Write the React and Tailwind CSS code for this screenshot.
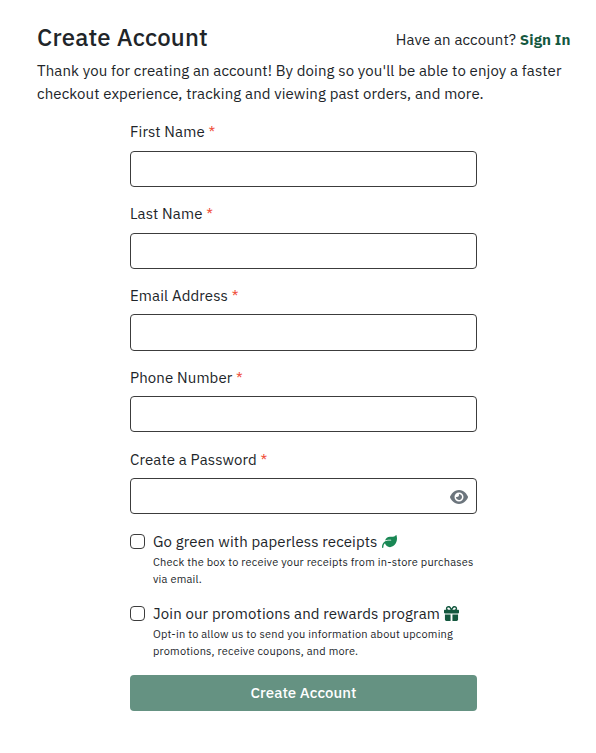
import React, { useState } from "react";
import { FaEye, FaGift, FaLeaf } from "react-icons/fa6";

const fields = [
  { id: "firstName", label: "First Name", type: "text" },
  { id: "lastName", label: "Last Name", type: "text" },
  { id: "email", label: "Email Address", type: "email" },
  { id: "phone", label: "Phone Number", type: "tel" },
  { id: "password", label: "Create a Password", type: "password" },
];

const Field = ({ field, value, onChange }) => {
  const [visible, setVisible] = useState(false);
  const isPassword = field.type === "password";

  return (
    <div className="mb-[16px] h-[65.8px]">
      <label htmlFor={field.id} className="block h-[30.45px] text-[15px] leading-[23px] tracking-[0.12px]">
        {field.label} <span className="text-[#f0503c]">*</span>
      </label>
      <div className="relative">
        <input
          id={field.id}
          type={isPassword && visible ? "text" : field.type}
          value={value}
          onChange={(e) => onChange(field.id, e.target.value)}
          className="block h-[36.2px] w-full rounded-[4px] border border-[#3c3c3c] px-3 text-[15px] outline-none"
          required
        />
        {isPassword && (
          <button
            type="button"
            aria-label="Show password"
            onClick={() => setVisible(!visible)}
            className="absolute top-[11px] right-[9px] text-[#6c757d]"
          >
            <FaEye className="h-[16px] w-[18px]" />
          </button>
        )}
      </div>
    </div>
  );
};

const Option = ({ id, title, icon, children }) => (
  <div className="flex h-[72px] items-start">
    <input
      id={id}
      type="checkbox"
      className="mt-[4px] mr-2 h-[15px] w-[15px] shrink-0 appearance-none rounded-[4px] border border-[#3c3c3c] checked:bg-[#14583f]"
    />
    <div className="whitespace-nowrap">
      <label htmlFor={id} className="flex h-[24px] items-start text-[15px] leading-[23px] tracking-[0.12px]">
        {title}
        {icon}
      </label>
      <p className="text-[11px] leading-[17px] tracking-[0.2px]">{children}</p>
    </div>
  </div>
);

const App = () => {
  const [form, setForm] = useState({});

  const handleChange = (id, value) => {
    setForm({ ...form, [id]: value });
  };

  const handleSubmit = (e) => {
    e.preventDefault();
  };

  return (
    <div className="min-h-[753px] bg-white pt-[22px] pr-[25.5px] pl-[37px] font-['IBM_Plex_Sans',Roboto,sans-serif] text-[#212529]">
      <header className="flex h-[38px] items-start justify-between whitespace-nowrap">
        <h1 className="text-[24px] leading-[30px] font-medium tracking-[0.18px]">Create Account</h1>
        <p className="pt-[7px] text-[15px] leading-[22.5px] tracking-[0.12px]">
          Have an account?{" "}
          <a href="#" className="font-bold text-[#14583f]">
            Sign In
          </a>
        </p>
      </header>
      <p className="text-[15px] leading-[22.5px] tracking-[0.11px] whitespace-nowrap">
        Thank you for creating an account! By doing so you'll be able to enjoy a faster
        <br />
        checkout experience, tracking and viewing past orders, and more.
      </p>

      <form onSubmit={handleSubmit} className="ml-[93px] w-[347px] pt-[15.35px]">
        {fields.map((field) => (
          <Field key={field.id} field={field} value={form[field.id] || ""} onChange={handleChange} />
        ))}
        <div className="h-[145.65px] pt-[1.15px]">
          <Option
            id="paperless"
            title="Go green with paperless receipts"
            icon={<FaLeaf className="mt-[4px] ml-1 h-[15px] w-[15px] text-[#198754]" />}
          >
            Check the box to receive your receipts from in-store purchases
            <br />
            via email.
          </Option>
          <Option
            id="rewards"
            title="Join our promotions and rewards program"
            icon={<FaGift className="mt-[4px] ml-1 h-[15px] w-[15px] text-[#14583f]" />}
          >
            Opt-in to allow us to send you information about upcoming
            <br />
            promotions, receive coupons, and more.
          </Option>
        </div>
        <button
          type="submit"
          className="h-[36px] w-full rounded-[4px] bg-[#659282] pt-[1px] text-[15px] font-medium tracking-[0.05px] text-white"
        >
          Create Account
        </button>
      </form>
    </div>
  );
};

export default App;
